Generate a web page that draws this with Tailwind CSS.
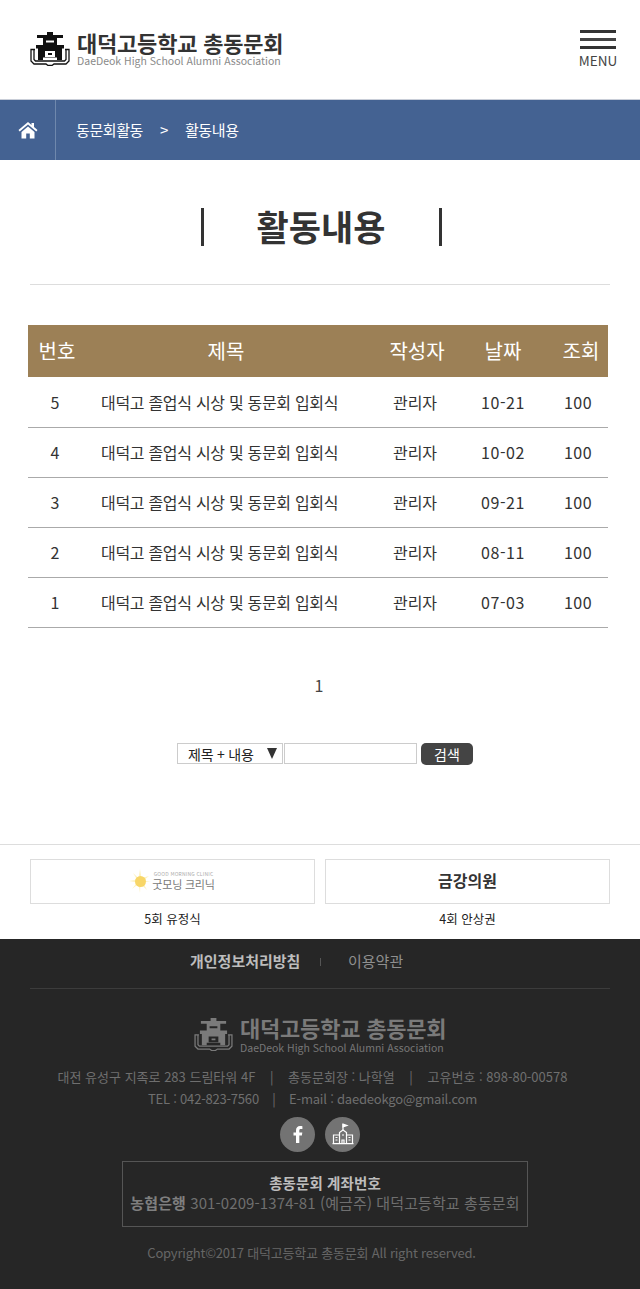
<!DOCTYPE html>
<html lang="ko">
<head>
    <meta charset="UTF-8">
    <meta name="viewport" content="width=device-width, initial-scale=1.0">
    <title>활동내용</title>
    <script src="https://cdn.jsdelivr.net/npm/@tailwindcss/browser@4"></script>
</head>
<body class="bg-white font-['Noto_Sans_CJK_KR','Noto_Sans',sans-serif] text-[#333]">
    <svg class="hidden">
        <symbol id="emblem" viewBox="0 0 40 34">
            <path fill="currentColor" fill-rule="evenodd" d="M17 0h6v3h10v3H27v7h7v3.500h-2V28h-5v-2.500h-2v0H15v0h-2V28H8V16.500H6V13h7V6H7V3h10zM16 8.500v2h8v-2zM15 19v6h10v-6zM18 21h4v2h-4z"/>
            <path fill="none" stroke="currentColor" stroke-width="1.300" d="M5 17.500H1v11.500l3 3h12l2 1.500h4l2-1.500h12l3-3V17.500h-4M4 18v9.500l1.500 1.500h29l1.500-1.500V18"/>
        </symbol>
    </svg>

    <!-- 상단 -->
    <header class="h-[100px] border-b border-[#c9ced8] px-[30px] flex items-center justify-between">
        <div class="flex items-center gap-[7px] mt-[-1px]">
            <svg class="w-[40px] h-[34px] text-[#111]"><use href="#emblem"/></svg>
            <div class="w-[206px] mt-[-2px]">
                <p class="text-[22px] leading-[24px] font-bold tracking-[-0.2px] text-[#333] whitespace-nowrap">대덕고등학교 총동문회</p>
                <p class="text-[10.500px] leading-[13px] text-[#8a8a8a] whitespace-nowrap">DaeDeok High School Alumni Association</p>
            </div>
        </div>
        <button class="w-[36px] mt-[-1px] flex flex-col items-center mr-[-6px]">
            <span class="block w-full h-[3px] bg-[#333]"></span>
            <span class="block w-full h-[3px] bg-[#444] mt-[5px]"></span>
            <span class="block w-full h-[3px] bg-[#333] mt-[5px]"></span>
            <span class="text-[13.500px] leading-[16px] mt-[3px] text-[#444]">MENU</span>
        </button>
    </header>

    <!-- 경로 -->
    <nav class="h-[60px] bg-[#446292] flex items-center text-white text-[15px] tracking-[-0.4px]">
        <div class="w-[56px] h-full border-r border-[#6f88ad] flex items-center justify-center">
            <svg class="w-[20px] h-[18px]" viewBox="0 0 20 18" fill="white"><path d="M10 1 0.500 9l1.200 1.400L10 3.500l8.300 6.900L19.500 9 16 6V2h-2.500v1.900zM3.500 11 10 5.500l6.500 5.500v6.500h-4.700v-5H8.200v5H3.500z"/></svg>
        </div>
        <span class="ml-[20px]">동문회활동</span>
        <span class="ml-[17px]">&gt;</span>
        <span class="ml-[17px]">활동내용</span>
    </nav>

    <main>
        <div class="mx-[30px] h-[125px] border-b border-[#ddd] pt-[48px]">
            <div class="flex justify-center pl-[2px]">
                <h1 class="w-[241px] h-[38px] border-x-[3px] border-[#333] text-center text-[35px] leading-[36px] font-bold text-[#333]">활동내용</h1>
            </div>
        </div>

        <table class="ml-[28px] mt-[40px] w-[580px] table-fixed text-[16px] text-[#333]">
            <thead class="bg-[#9c8056] text-white text-[20px]">
                <tr class="h-[52px]">
                    <th class="w-[58px] font-normal">번호</th>
                    <th class="w-[280px] font-normal">제목</th>
                    <th class="w-[98px] font-normal pl-[4px]">작성자</th>
                    <th class="w-[74px] font-normal pl-[4px]">날짜</th>
                    <th class="font-normal pl-[16px]">조회</th>
                </tr>
            </thead>
            <tbody>
                <tr class="h-[50px] border-b border-[#aaa]"><td class="text-center pr-[4px]">5</td><td class="pl-[15px] tracking-[-0.3px]">대덕고 졸업식 시상 및 동문회 입회식</td><td class="text-center">관리자</td><td class="text-center pl-[4px] tracking-[0.6px]">10-21</td><td class="text-center pl-[10px] tracking-[0.4px]">100</td></tr>
                <tr class="h-[50px] border-b border-[#aaa]"><td class="text-center pr-[4px]">4</td><td class="pl-[15px] tracking-[-0.3px]">대덕고 졸업식 시상 및 동문회 입회식</td><td class="text-center">관리자</td><td class="text-center pl-[4px] tracking-[0.6px]">10-02</td><td class="text-center pl-[10px] tracking-[0.4px]">100</td></tr>
                <tr class="h-[50px] border-b border-[#aaa]"><td class="text-center pr-[4px]">3</td><td class="pl-[15px] tracking-[-0.3px]">대덕고 졸업식 시상 및 동문회 입회식</td><td class="text-center">관리자</td><td class="text-center pl-[4px] tracking-[0.6px]">09-21</td><td class="text-center pl-[10px] tracking-[0.4px]">100</td></tr>
                <tr class="h-[50px] border-b border-[#aaa]"><td class="text-center pr-[4px]">2</td><td class="pl-[15px] tracking-[-0.3px]">대덕고 졸업식 시상 및 동문회 입회식</td><td class="text-center">관리자</td><td class="text-center pl-[4px] tracking-[0.6px]">08-11</td><td class="text-center pl-[10px] tracking-[0.4px]">100</td></tr>
                <tr class="h-[50px] border-b border-[#aaa]"><td class="text-center pr-[4px]">1</td><td class="pl-[15px] tracking-[-0.3px]">대덕고 졸업식 시상 및 동문회 입회식</td><td class="text-center">관리자</td><td class="text-center pl-[4px] tracking-[0.6px]">07-03</td><td class="text-center pl-[10px] tracking-[0.4px]">100</td></tr>
            </tbody>
        </table>

        <p class="mt-[46px] text-center text-[16px] leading-[22px] text-[#444] pr-[2px]">1</p>

        <form class="mt-[47px] flex items-center justify-center gap-[1px] h-[22px] pl-[10px] text-[14px] text-[#222]">
            <div class="w-[106px] h-[21px] border border-[#ccc] flex items-center justify-between pl-[10px] pr-[4px] leading-none">
                <span class="tracking-[-0.2px]">제목 + 내용</span>
                <span class="w-0 h-0 border-x-[5px] border-x-transparent border-t-[11px] border-t-[#333] mr-[1px]"></span>
            </div>
            <input type="text" class="w-[133px] h-[21px] border border-[#ccc]">
            <button type="button" class="ml-[3px] w-[52px] h-[22px] rounded-[5px] bg-[#444] text-white text-[14px] leading-none">검색</button>
        </form>

        <!-- 후원 배너 -->
        <section class="mt-[79px] h-[95px] border-t border-[#ddd] px-[30px] pt-[14px] grid grid-cols-2 gap-x-[10px]">
            <div>
                <div class="h-[45px] border border-[#ddd] flex items-center justify-center gap-[1px] pr-[1px]">
                    <div class="relative w-[22px] h-[24px] flex items-center justify-center">
                        <svg class="absolute inset-0 w-[22px] h-[24px]" viewBox="0 0 22 24" fill="#fdf3c4"><path d="M11 0l1.500 9L20 7l-6 5 8 0-8 1.500L18 21l-6.500-6L11 24l-1.500-9L3 20l5-6.500L0 12l8-1.500L4 4l5.500 5z"/></svg>
                        <span class="relative w-[11px] h-[11px] rounded-full bg-[#f8d667]"></span>
                    </div>
                    <div class="text-[#777] whitespace-nowrap">
                        <p class="text-[5px] leading-[6px] tracking-[0.2px] text-[#aaa] text-center">GOOD MORNING CLINIC</p>
                        <p class="text-[11px] leading-[14px] tracking-[-0.2px]">굿모닝 크리닉</p>
                    </div>
                </div>
                <p class="mt-[6px] text-center text-[12.500px] leading-[17px] text-[#222]">5회 유정식</p>
            </div>
            <div>
                <div class="h-[45px] border border-[#ddd] flex items-center justify-center text-[16px] font-bold text-[#333] pb-[2px]">금강의원</div>
                <p class="mt-[6px] text-center text-[12.500px] leading-[17px] text-[#222]">4회 안상권</p>
            </div>
        </section>
    </main>

    <!-- 하단 -->
    <footer class="h-[350px] bg-[#262626] px-[30px] text-center text-[#6f6f6f]">
        <div class="h-[50px] border-b border-[#3c3c3c] flex items-center pl-[160px] pb-[3px] text-[15px]">
            <a class="font-bold text-[#bdbdbd] w-[109px] whitespace-nowrap">개인정보처리방침</a>
            <span class="w-px h-[8px] bg-[#555] ml-[21px] mr-[27px]"></span>
            <a class="text-[#8f8f8f]">이용약관</a>
        </div>

        <div class="mt-[26px] flex items-center justify-center gap-[7px] pr-[1px]">
            <svg class="w-[39px] h-[33px] text-[#7a7a7a]"><use href="#emblem"/></svg>
            <div class="text-left w-[205px]">
                <p class="text-[22px] leading-[24px] font-bold tracking-[-0.2px] whitespace-nowrap text-[#7a7a7a]">대덕고등학교 총동문회</p>
                <p class="text-[10.500px] leading-[13px] mt-[2px] text-[#777] whitespace-nowrap">DaeDeok High School Alumni Association</p>
            </div>
        </div>

        <div class="mt-[12px] pr-[15px] text-[13px] leading-[22px]">
            <p class="whitespace-nowrap">대전 유성구 지족로 283 드림타워 4F <span class="mx-[11px]">|</span> 총동문회장 : 나학열 <span class="mx-[11px]">|</span> 고유번호 : 898-80-00578</p>
            <p class="whitespace-nowrap tracking-[-0.2px]">TEL : 042-823-7560 <span class="mx-[10px]">|</span> E-mail : daedeokgo@gmail.com</p>
        </div>

        <div class="mt-[7px] flex justify-center gap-[10px]">
            <a class="w-[35px] h-[35px] rounded-full bg-[#737373] flex items-center justify-center">
                <svg class="w-[10px] h-[17px]" viewBox="0 0 10 17" fill="white"><path d="M3 17V9.500H0.500v-3H3V4.300C3 1.600 4.600 0 7 0c1 0 1.800.1 2.400.2v2.700H7.800c-1.200 0-1.500.6-1.500 1.500v2.100h3l-.4 3H6.300V17z"/></svg>
            </a>
            <a class="w-[35px] h-[35px] rounded-full bg-[#737373] flex items-center justify-center">
                <svg class="w-[22px] h-[22px]" viewBox="0 0 22 22" fill="none" stroke="white" stroke-width="1.200"><path d="M11 7V1" /><path d="M11 1l4 1.500-4 1.500z" fill="white"/><path d="M1.500 20.500V12h6v8.500M14.500 12h6v8.500M0.500 20.700h21M7.500 20.500V9.500L11 7l3.500 2.500v11"/><path d="M3.500 14.500h2M3.500 17h2M16.500 14.500h2M16.500 17h2M10 12h2M10 17h2v3.500h-2z"/></svg>
            </a>
        </div>

        <div class="ml-[92px] mt-[9px] w-[406px] h-[66px] border border-[#555] pt-[11px] text-[15px] leading-[20px] whitespace-nowrap">
            <p class="font-bold text-[14.500px] tracking-[0.1px] text-[#bdbdbd]">총동문회 계좌번호</p>
            <p class="text-[#6f6f6f] tracking-[0.1px]"><b class="text-[#7f7f7f]">농협은행</b> 301-0209-1374-81 (예금주) 대덕고등학교 총동문회</p>
        </div>

        <p class="mt-[16px] pr-[17px] text-[13px] leading-[20px] tracking-[-0.2px] text-[#666]">Copyright©2017 대덕고등학교 총동문회 All right reserved.</p>
    </footer>
</body>
</html>
